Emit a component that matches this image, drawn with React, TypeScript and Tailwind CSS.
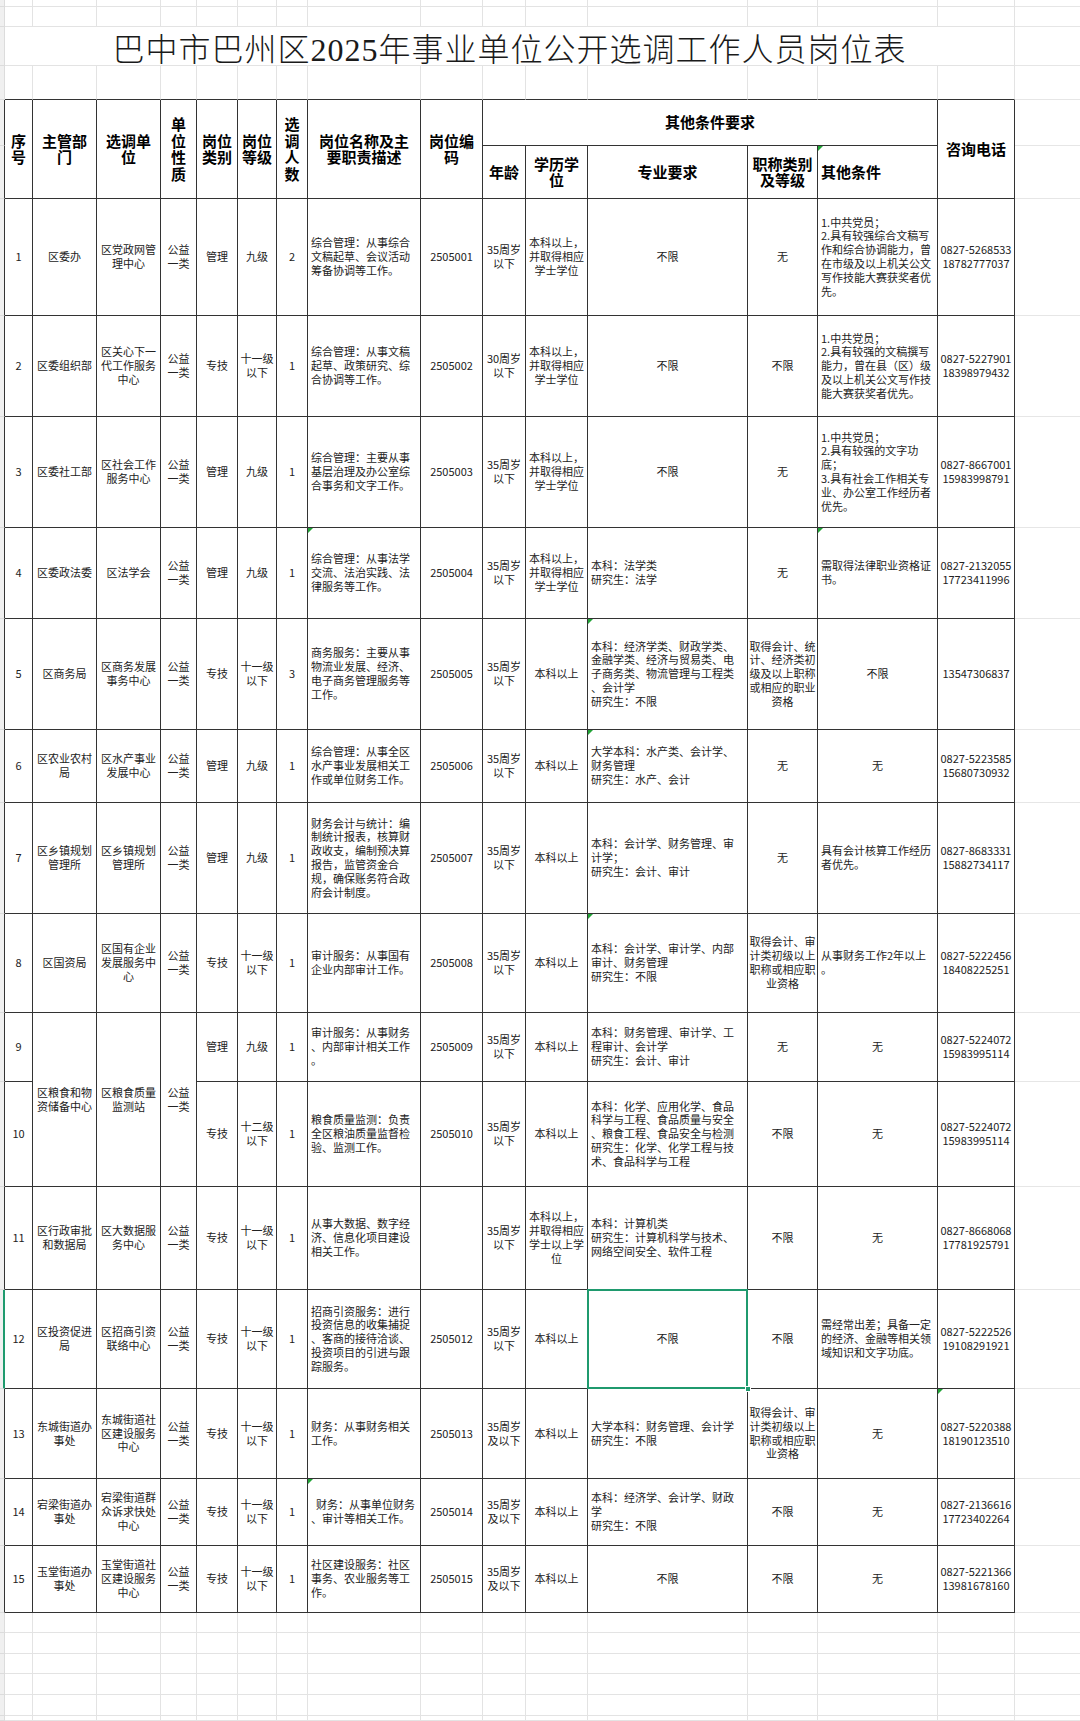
import React from "react";

// 巴中市巴州区 选调岗位表 — spreadsheet screenshot

type Cell = { t: string; a?: "c" | "l"; rs?: number; tri?: boolean; sel?: boolean };
type Row = { cells: (string | Cell)[]; green?: boolean };

const L = (t: string, extra: Partial<Cell> = {}): Cell => ({ t, a: "l", ...extra });
const C = (t: string, extra: Partial<Cell> = {}): Cell => ({ t, a: "c", ...extra });

const PX = "公益\n一类";
const BK = "本科以上，\n并取得相应\n学士学位";
const AGE = "35周岁\n以下";
const AGE2 = "35周岁\n及以下";
const G11 = "十一级\n以下";

const rows: Row[] = [
  {
    cells: ["1", "区委办", "区党政网管\n理中心", PX, "管理", "九级", "2",
      L("综合管理：从事综合\n文稿起草、会议活动\n筹备协调等工作。"), "2505001", AGE, BK, "不限", "无",
      L("1.中共党员；\n2.具有较强综合文稿写\n作和综合协调能力，曾\n在市级及以上机关公文\n写作技能大赛获奖者优\n先。"),
      "0827-5268533\n18782777037"],
  },
  {
    cells: ["2", "区委组织部", "区关心下一\n代工作服务\n中心", PX, "专技", G11, "1",
      L("综合管理：从事文稿\n起草、政策研究、综\n合协调等工作。"), "2505002", "30周岁\n以下", BK, "不限", "不限",
      L("1.中共党员；\n2.具有较强的文稿撰写\n能力，曾在县（区）级\n及以上机关公文写作技\n能大赛获奖者优先。"),
      "0827-5227901\n18398979432"],
  },
  {
    cells: ["3", "区委社工部", "区社会工作\n服务中心", PX, "管理", "九级", "1",
      L("综合管理：主要从事\n基层治理及办公室综\n合事务和文字工作。"), "2505003", AGE, BK, "不限", "无",
      L("1.中共党员；\n2.具有较强的文字功\n底；\n3.具有社会工作相关专\n业、办公室工作经历者\n优先。"),
      "0827-8667001\n15983998791"],
  },
  {
    cells: ["4", "区委政法委", "区法学会", PX, "管理", "九级", "1",
      L("综合管理：从事法学\n交流、法治实践、法\n律服务等工作。", { tri: true }), "2505004", AGE, BK,
      L("本科：法学类\n研究生：法学"), "无",
      L("需取得法律职业资格证\n书。", { tri: true }),
      "0827-2132055\n17723411996"],
  },
  {
    cells: ["5", "区商务局", "区商务发展\n事务中心", PX, "专技", G11, "3",
      L("商务服务：主要从事\n物流业发展、经济、\n电子商务管理服务等\n工作。"), "2505005", AGE, "本科以上",
      L("本科：经济学类、财政学类、\n金融学类、经济与贸易类、电\n子商务类、物流管理与工程类\n、会计学\n研究生：不限", { tri: true }),
      "取得会计、统\n计、经济类初\n级及以上职称\n或相应的职业\n资格", "不限",
      "13547306837"],
  },
  {
    cells: ["6", "区农业农村\n局", "区水产事业\n发展中心", PX, "管理", "九级", "1",
      L("综合管理：从事全区\n水产事业发展相关工\n作或单位财务工作。"), "2505006", AGE, "本科以上",
      L("大学本科：水产类、会计学、\n财务管理\n研究生：水产、会计", { tri: true }), "无", "无",
      "0827-5223585\n15680730932"],
  },
  {
    cells: ["7", "区乡镇规划\n管理所", "区乡镇规划\n管理所", PX, "管理", "九级", "1",
      L("财务会计与统计：编\n制统计报表，核算财\n政收支，编制预决算\n报告，监管资金合\n规，确保账务符合政\n府会计制度。"),
      "2505007", AGE, "本科以上",
      L("本科：会计学、财务管理、审\n计学；\n研究生：会计、审计"), "无",
      L("具有会计核算工作经历\n者优先。"),
      "0827-8683331\n15882734117"],
  },
  {
    cells: ["8", "区国资局", "区国有企业\n发展服务中\n心", PX, "专技", G11, "1",
      L("审计服务：从事国有\n企业内部审计工作。"), "2505008", AGE, "本科以上",
      L("本科：会计学、审计学、内部\n审计、财务管理\n研究生：不限", { tri: true }),
      "取得会计、审\n计类初级以上\n职称或相应职\n业资格",
      L("从事财务工作2年以上\n。"),
      "0827-5222456\n18408225251"],
  },
  {
    cells: ["9", C("区粮食和物\n资储备中心", { rs: 2 }), C("区粮食质量\n监测站", { rs: 2 }), C(PX, { rs: 2 }),
      "管理", "九级", "1",
      L("审计服务：从事财务\n、内部审计相关工作\n。"), "2505009", AGE, "本科以上",
      L("本科：财务管理、审计学、工\n程审计、会计学\n研究生：会计、审计"), "无", "无",
      "0827-5224072\n15983995114"],
  },
  {
    cells: ["10", "专技", "十二级\n以下", "1",
      L("粮食质量监测：负责\n全区粮油质量监督检\n验、监测工作。"), "2505010", AGE, "本科以上",
      L("本科：化学、应用化学、食品\n科学与工程、食品质量与安全\n、粮食工程、食品安全与检测\n研究生：化学、化学工程与技\n术、食品科学与工程"),
      "不限", "无",
      "0827-5224072\n15983995114"],
  },
  {
    cells: ["11", "区行政审批\n和数据局", "区大数据服\n务中心", PX, "专技", G11, "1",
      L("从事大数据、数字经\n济、信息化项目建设\n相关工作。"), "", AGE, "本科以上，\n并取得相应\n学士以上学\n位",
      L("本科：计算机类\n研究生：计算机科学与技术、\n网络空间安全、软件工程"), "不限", "无",
      "0827-8668068\n17781925791"],
  },
  {
    green: true,
    cells: ["12", "区投资促进\n局", "区招商引资\n联络中心", PX, "专技", G11, "1",
      L("招商引资服务：进行\n投资信息的收集捕捉\n、客商的接待洽谈、\n投资项目的引进与跟\n踪服务。"), "2505012", AGE, "本科以上",
      C("不限", { sel: true }), "不限",
      L("需经常出差；具备一定\n的经济、金融等相关领\n域知识和文字功底。"),
      "0827-5222526\n19108291921"],
  },
  {
    cells: ["13", "东城街道办\n事处", "东城街道社\n区建设服务\n中心", PX, "专技", G11, "1",
      L("财务：从事财务相关\n工作。"), "2505013", AGE2, "本科以上",
      L("大学本科：财务管理、会计学\n研究生：不限"),
      "取得会计、审\n计类初级以上\n职称或相应职\n业资格", "无",
      C("0827-5220388\n18190123510", { tri: true })],
  },
  {
    cells: ["14", "宕梁街道办\n事处", "宕梁街道群\n众诉求快处\n中心", PX, "专技", G11, "1",
      L("  财务：从事单位财务\n、审计等相关工作。", { tri: true }), "2505014", AGE2, "本科以上",
      L("本科：经济学、会计学、财政\n学\n研究生：不限"), "不限", "无",
      "0827-2136616\n17723402264"],
  },
  {
    cells: ["15", "玉堂街道办\n事处", "玉堂街道社\n区建设服务\n中心", PX, "专技", G11, "1",
      L("社区建设服务：社区\n事务、农业服务等工\n作。"), "2505015", AGE2, "本科以上", "不限", "不限", "无",
      "0827-5221366\n13981678160"],
  },
];

const fifteen = Array.from({ length: 15 }, (_, i) => i);

const Tri = () => (
  <div className="absolute top-0 left-0 w-0 h-0 border-t-[5px] border-r-[5px] border-t-[#21a336] border-r-transparent" />
);

const Gutter = ({ dark, green }: { dark?: boolean; green?: boolean }) => {
  if (green) return <div className="bg-[#f0f0f0] border-b border-b-[#dcdcdc] border-r-2 border-r-[#1f9a6e]" />;
  if (dark) return <div className="bg-[#f0f0f0] border-b border-b-[#dcdcdc] border-r border-r-[#333]" />;
  return <div className="bg-[#f0f0f0] border-r border-b border-[#dcdcdc]" />;
};

const Filler = () => <div className="border-b border-[#e6e6e6]" />;

const BlankRow = ({ darkBottom }: { darkBottom?: boolean }) => (
  <>
    <Gutter />
    {fifteen.map((i) => (
      <div
        key={i}
        className={
          darkBottom
            ? "border-r border-b border-r-[#e3e3e3] border-b-[#333]"
            : "border-r border-b border-[#e3e3e3]"
        }
      />
    ))}
    <Filler />
  </>
);

const Hd: React.FC<{ t: string; cls?: string; left?: boolean; tri?: boolean }> = ({ t, cls = "", left, tri }) => (
  <div
    className={`relative flex items-center border-r border-b border-[#333] font-bold text-[15px] leading-[16.5px] text-black ${
      left ? "justify-start pl-[3px] text-left" : "justify-center text-center"
    } ${cls}`}
  >
    {tri && <Tri />}
    <span className="whitespace-pre">{t}</span>
  </div>
);

const DataCell = ({ c }: { c: string | Cell }) => {
  const cell: Cell = typeof c === "string" ? { t: c } : c;
  const left = cell.a === "l";
  return (
    <div
      className={`relative flex items-center border-r border-b border-[#333] ${
        left ? "justify-start pl-[3px] text-left" : "justify-center text-center"
      } ${cell.rs === 2 ? "row-span-2" : ""}`}
    >
      {cell.tri && <Tri />}
      <span className="whitespace-pre">{cell.t}</span>
      {cell.sel && (
        <>
          <div className="absolute -top-px -left-px -right-px -bottom-px border-2 border-[#1f9a6e] z-10" />
          <div className="absolute -right-[4px] -bottom-[4px] w-[6px] h-[6px] bg-[#1f9a6e] border border-white z-10" />
        </>
      )}
    </div>
  );
};

export default function App() {
  return (
    <div className="w-[1080px] h-[1721px] bg-white overflow-hidden font-['Noto_Sans_CJK_SC',sans-serif] text-[#222]">
      <div className="grid grid-cols-[5px_28px_64px_64px_36px_41px_39px_31px_113px_62px_43px_62px_160px_70px_120px_77px_65px] grid-rows-[7px_20px_39px_34px_46px_53px_117px_101px_111px_91px_111px_73px_111px_99px_69px_105px_103px_99px_90px_67px_67px_20px_21px_20px_21px_21px_5px] text-[11px] leading-[13.8px]">
        {/* blank sheet rows + title */}
        <BlankRow />
        <BlankRow />
        <Gutter />
        <div className="col-span-15 flex items-center justify-center border-r border-b border-[#e3e3e3]">
          <h1 className="translate-y-[4px] font-['Liberation_Serif','Noto_Sans_CJK_SC',serif] font-light text-[32px] leading-[36px] tracking-[1px] text-[#1a1a1a] whitespace-nowrap">
            巴中市巴州区2025年事业单位公开选调工作人员岗位表
          </h1>
        </div>
        <Filler />
        <BlankRow darkBottom />

        {/* header */}
        <Gutter dark />
        <Hd t={"序\n号"} cls="row-span-2" />
        <Hd t={"主管部\n门"} cls="row-span-2" />
        <Hd t={"选调单\n位"} cls="row-span-2" />
        <Hd t={"单\n位\n性\n质"} cls="row-span-2" />
        <Hd t={"岗位\n类别"} cls="row-span-2" />
        <Hd t={"岗位\n等级"} cls="row-span-2" />
        <Hd t={"选\n调\n人\n数"} cls="row-span-2" />
        <Hd t={"岗位名称及主\n要职责描述"} cls="row-span-2" />
        <Hd t={"岗位编\n码"} cls="row-span-2" />
        <Hd t="其他条件要求" cls="col-span-5" />
        <Hd t="咨询电话" cls="row-span-2" />
        <Filler />
        <Gutter dark />
        <Hd t="年龄" />
        <Hd t={"学历学\n位"} />
        <Hd t="专业要求" />
        <Hd t={"职称类别\n及等级"} />
        <Hd t="其他条件" left tri />
        <Filler />

        {/* data rows */}
        {rows.map((r, ri) => (
          <React.Fragment key={ri}>
            <Gutter dark green={r.green} />
            {r.cells.map((c, ci) => (
              <DataCell key={ci} c={c} />
            ))}
            <Filler />
          </React.Fragment>
        ))}

        {/* blank rows under the table */}
        <BlankRow />
        <BlankRow />
        <BlankRow />
        <BlankRow />
        <BlankRow />
        <BlankRow />
      </div>
    </div>
  );
}
